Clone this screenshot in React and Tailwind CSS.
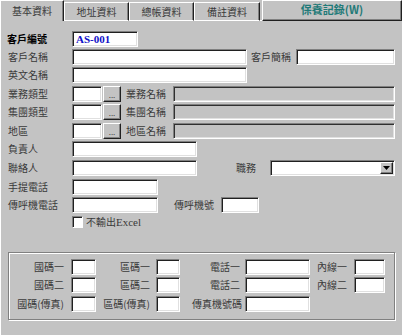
import React from "react";

const SUNKEN =
  "h-[16px] bg-white border border-t-[#808080] border-l-[#808080] border-b-white border-r-white shadow-[inset_1px_1px_0_#202020,inset_-1px_-1px_0_#e0e0e0]";
const DISABLED =
  "h-[16px] bg-[#c3c3c3] border border-t-[#808080] border-l-[#808080] border-b-white border-r-white shadow-[inset_1px_1px_0_#303030,inset_-1px_-1px_0_#e0e0e0]";
const RAISED =
  "bg-[#c3c3c3] border border-t-white border-l-white border-b-[#202020] border-r-[#202020] shadow-[inset_-1px_-1px_0_#808080]";

function Label({ children, className = "" }) {
  return (
    <div className={"text-[10px] leading-none text-[#3a3a3a] whitespace-nowrap " + className}>
      {children}
    </div>
  );
}

function Dots() {
  return (
    <div className={RAISED + " ml-[1px] w-[18px] h-[16px] flex items-end justify-center pb-[2px]"}>
      <span className="text-[8px] leading-none text-[#444]">...</span>
    </div>
  );
}

export default function App() {
  return (
    <div className="w-[402px] h-[335px] bg-[#c3c3c3] overflow-hidden font-['Noto_Sans_CJK_TC','Noto_Sans',sans-serif]">
      {/* tab bar */}
      <div className="flex items-end h-[21px]">
        <div className="w-[64px] h-[21px] border-l border-t border-white border-r border-r-[#202020] shadow-[inset_-1px_0_0_#808080] flex items-center justify-center">
          <span className="text-[10px] leading-none text-[#3a3a3a] -mt-[1px]">基本資料</span>
        </div>
        <div className="w-[65px] h-[19px] border-l border-t border-white border-r border-r-[#202020] border-b border-b-white shadow-[inset_-1px_0_0_#808080] flex items-center justify-center">
          <span className="text-[10px] leading-none text-[#3a3a3a]">地址資料</span>
        </div>
        <div className="w-[65px] h-[19px] border-l border-t border-white border-r border-r-[#202020] border-b border-b-white shadow-[inset_-1px_0_0_#808080] flex items-center justify-center">
          <span className="text-[10px] leading-none text-[#3a3a3a]">總帳資料</span>
        </div>
        <div className="w-[66px] h-[19px] border-l border-t border-white border-r border-r-[#202020] border-b border-b-white shadow-[inset_-1px_0_0_#808080] flex items-center justify-center">
          <span className="text-[10px] leading-none text-[#3a3a3a]">備註資料</span>
        </div>
        <div className="w-[2px] h-[1px] bg-white" />
        <div className={RAISED + " flex-1 h-[21px] flex items-center justify-center"}>
          <span className="text-[11px] leading-none font-bold text-[#1f7a78] -mt-[2px]">保養記錄(W)</span>
        </div>
      </div>

      {/* page */}
      <div className="border-l border-white h-[314px] pt-[10px]">
        {/* 客戶編號 */}
        <div className="flex items-center">
          <Label className="w-[71px] pl-[6px] font-bold text-black">客戶編號</Label>
          <div className={SUNKEN + " w-[66px] flex items-center pl-[3px]"}>
            <span className="font-['Liberation_Serif',serif] font-bold text-[11px] leading-none text-[#1010c8]">AS-001</span>
          </div>
        </div>
        {/* 客戶名稱 */}
        <div className="flex items-center mt-[2px]">
          <Label className="w-[71px] pl-[7px]">客戶名稱</Label>
          <div className={SUNKEN + " w-[175px]"} />
          <Label className="w-[49px] pl-[4px]">客戶簡稱</Label>
          <div className={SUNKEN + " w-[99px]"} />
        </div>
        {/* 英文名稱 */}
        <div className="flex items-center mt-[2px]">
          <Label className="w-[71px] pl-[7px]">英文名稱</Label>
          <div className={SUNKEN + " w-[175px]"} />
        </div>
        {/* 業務類型 */}
        <div className="flex items-center mt-[3px]">
          <Label className="w-[71px] pl-[7px]">業務類型</Label>
          <div className={SUNKEN + " w-[30px]"} />
          <Dots />
          <Label className="w-[52px] pl-[5px]">業務名稱</Label>
          <div className={DISABLED + " w-[222px]"} />
        </div>
        {/* 集團類型 */}
        <div className="flex items-center mt-[2px]">
          <Label className="w-[71px] pl-[7px]">集團類型</Label>
          <div className={SUNKEN + " w-[30px]"} />
          <Dots />
          <Label className="w-[52px] pl-[5px]">集團名稱</Label>
          <div className={DISABLED + " w-[222px]"} />
        </div>
        {/* 地區 */}
        <div className="flex items-center mt-[3px]">
          <Label className="w-[71px] pl-[7px]">地區</Label>
          <div className={SUNKEN + " w-[30px]"} />
          <Dots />
          <Label className="w-[52px] pl-[5px]">地區名稱</Label>
          <div className={DISABLED + " w-[222px]"} />
        </div>
        {/* 負責人 */}
        <div className="flex items-center mt-[2px]">
          <Label className="w-[71px] pl-[7px]">負責人</Label>
          <div className={SUNKEN + " w-[125px]"} />
        </div>
        {/* 聯絡人 */}
        <div className="flex items-center mt-[3px]">
          <Label className="w-[71px] pl-[7px]">聯絡人</Label>
          <div className={SUNKEN + " w-[125px]"} />
          <Label className="w-[73px] pl-[39px]">職務</Label>
          <div className={SUNKEN + " w-[125px] flex items-center justify-end pr-[1px]"}>
            <div className={RAISED + " w-[13px] h-[12px] flex items-center justify-center"}>
              <svg width="7" height="4" viewBox="0 0 7 4">
                <path d="M0 0h7L3.5 4z" fill="#000" />
              </svg>
            </div>
          </div>
        </div>
        {/* 手提電話 */}
        <div className="flex items-center mt-[3px]">
          <Label className="w-[71px] pl-[7px]">手提電話</Label>
          <div className={SUNKEN + " w-[86px]"} />
        </div>
        {/* 傳呼機電話 */}
        <div className="flex items-center mt-[2px]">
          <Label className="w-[71px] pl-[7px]">傳呼機電話</Label>
          <div className={SUNKEN + " w-[86px]"} />
          <Label className="w-[63px] pl-[16px]">傳呼機號</Label>
          <div className={SUNKEN + " w-[38px]"} />
        </div>
        {/* checkbox */}
        <div className="flex items-center mt-[3px] pl-[71px]">
          <div className="w-[11px] h-[12px] bg-white border border-t-[#808080] border-l-[#808080] border-b-white border-r-white shadow-[inset_1px_1px_0_#202020]" />
          <span className="ml-[3px] text-[10px] leading-none text-[#3a3a3a]">
            不輸出<span className="font-['Liberation_Serif',serif] text-[11px]">Excel</span>
          </span>
        </div>

        {/* group box */}
        <div className="ml-[7px] mt-[24px] w-[387px] h-[68px] border border-[#808080] shadow-[inset_1px_1px_0_white,1px_1px_0_white] pt-[6px]">
          <div className="flex items-center">
            <Label className="w-[55px] text-right">國碼一</Label>
            <div className={SUNKEN + " ml-[7px] w-[25px]"} />
            <Label className="w-[54px] text-right">區碼一</Label>
            <div className={SUNKEN + " ml-[6px] w-[24px]"} />
            <Label className="w-[60px] text-right">電話一</Label>
            <div className={SUNKEN + " ml-[5px] w-[65px]"} />
            <Label className="w-[37px] text-right">內線一</Label>
            <div className={SUNKEN + " ml-[7px] w-[31px]"} />
          </div>
          <div className="flex items-center mt-[2px]">
            <Label className="w-[55px] text-right">國碼二</Label>
            <div className={SUNKEN + " ml-[7px] w-[25px]"} />
            <Label className="w-[54px] text-right">區碼二</Label>
            <div className={SUNKEN + " ml-[6px] w-[24px]"} />
            <Label className="w-[60px] text-right">電話二</Label>
            <div className={SUNKEN + " ml-[5px] w-[65px]"} />
            <Label className="w-[37px] text-right">內線二</Label>
            <div className={SUNKEN + " ml-[7px] w-[31px]"} />
          </div>
          <div className="flex items-center mt-[3px]">
            <Label className="w-[55px] text-right">國碼(傳真)</Label>
            <div className={SUNKEN + " ml-[7px] w-[25px]"} />
            <Label className="w-[54px] text-right">區碼(傳真)</Label>
            <div className={SUNKEN + " ml-[6px] w-[24px]"} />
            <Label className="w-[62px] text-right">傳真機號碼</Label>
            <div className={SUNKEN + " ml-[3px] w-[65px]"} />
          </div>
        </div>
      </div>
    </div>
  );
}
